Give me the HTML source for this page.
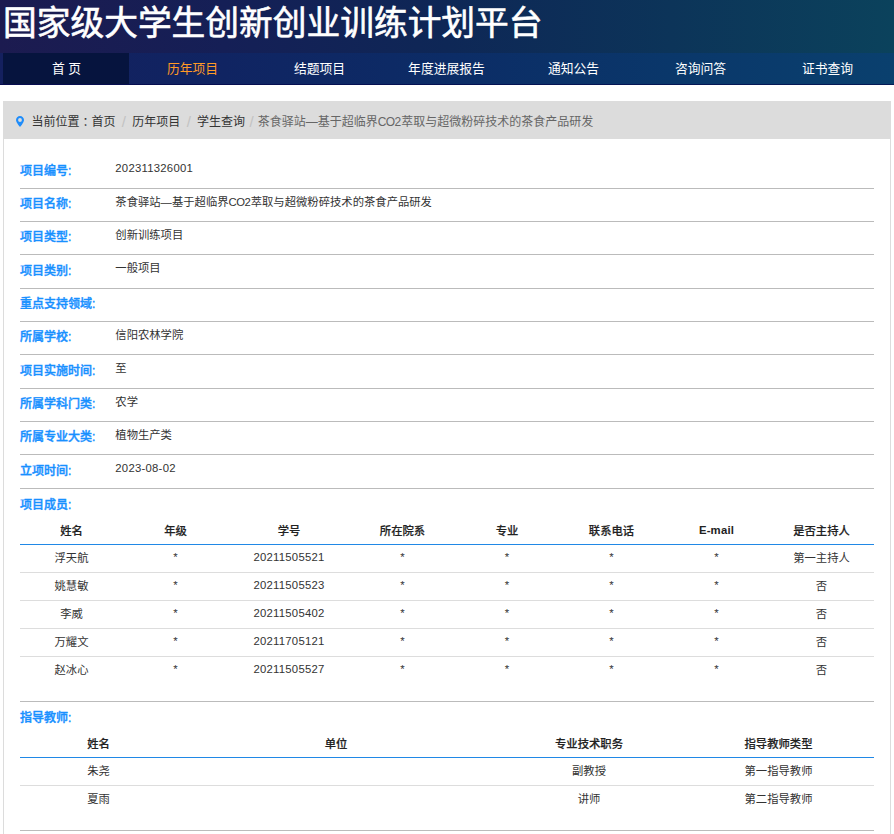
<!DOCTYPE html>
<html lang="zh-CN">
<head>
<meta charset="utf-8">
<title>国家级大学生创新创业训练计划平台</title>
<style>
*{box-sizing:border-box;margin:0;padding:0}
html,body{width:894px;height:834px;overflow:hidden;background:#fff}
body{font-family:"Liberation Sans","Noto Sans CJK SC",sans-serif;font-size:12px;color:#333;position:relative}
.header{position:absolute;left:0;top:0;width:894px;height:85px;background:linear-gradient(90deg,#1c1b50 0%,#151f56 25%,#0e2756 50%,#0c3459 75%,#0b425c 100%)}
.title{position:absolute;left:3px;top:-2px;font-size:33.72px;line-height:50px;color:#fff;white-space:nowrap;font-weight:400;-webkit-text-stroke:.6px #fff}
.nav{position:absolute;left:0;top:53px;width:894px;padding-left:3px;height:32px;border-bottom:1px solid rgba(0,0,70,.6);background:linear-gradient(90deg,#14205e 0%,#102462 25%,#0c2c66 50%,#0a376a 75%,#0a406e 100%);display:flex;list-style:none}
.nav li{width:127px;height:31px;line-height:31px;text-align:center;color:#fff;font-size:12.8px;white-space:nowrap}
.nav li.home{width:126px;background:#06143e;text-indent:1px}
.nav li.on{color:#ff9a26}
.wrap{position:absolute;left:3px;top:101px;width:888px;height:740px;border:1px solid #dcdcdc;border-top:0;background:#fff}
.crumb{position:absolute;left:-1px;top:0;width:888px;height:38px;background:#dcdcdc;line-height:37px;font-size:12px;color:#333;white-space:nowrap}
.crumb svg{position:absolute;left:13px;top:15px}
.crumb .t{position:absolute;left:28.5px;top:3px;height:37px}
.crumb em{font-style:normal;position:relative;left:3px}
.crumb i{font-style:normal;color:#c2c2c2;font-size:15px;line-height:1;padding:0 6.3px;position:relative;top:1px}
.crumb i.l{padding:0 4px 0 4.5px}
.crumb .last{color:#666}
.row{position:absolute;left:16px;width:854px;border-bottom:1px solid #bbb}
.row b{position:absolute;left:0;bottom:9px;line-height:16px;color:#1890ff;font-weight:500;-webkit-text-stroke:.4px #1890ff;font-size:12px;white-space:nowrap}
.row span{position:absolute;left:95.3px;top:5px;line-height:16px;font-size:11.33px;color:#333;white-space:nowrap}
.n{letter-spacing:.25px}
small{font-size:inherit;letter-spacing:-.6px;margin-right:.6px}
table{position:absolute;left:16px;width:854px;border-collapse:collapse;table-layout:fixed}
th{height:28px;font-size:11.33px;font-weight:500;-webkit-text-stroke:.2px #222;color:#222;border-bottom:1px solid #2088e6;text-align:center;padding:0}
td{height:28px;font-size:11.33px;color:#333;border-bottom:1px solid #ddd;text-align:center;padding:0 0 2px}
tr:last-child td{border-bottom:0}
th.e{font-weight:700;-webkit-text-stroke:0;letter-spacing:.2px}
</style>
</head>
<body>
<div class="header">
  <div class="title">国家级大学生创新创业训练计划平台</div>
  <ul class="nav">
    <li class="home">首 页</li>
    <li class="on">历年项目</li>
    <li>结题项目</li>
    <li>年度进展报告</li>
    <li>通知公告</li>
    <li>咨询问答</li>
    <li>证书查询</li>
  </ul>
</div>
<div class="wrap">
  <div class="crumb">
    <svg width="8" height="11" viewBox="0 0 8 11"><path d="M4 0C1.8 0 0 1.8 0 4 0 6.6 4 11 4 11S8 6.6 8 4C8 1.8 6.2 0 4 0zm0 5.9a1.9 1.9 0 1 1 0-3.8 1.9 1.9 0 0 1 0 3.8z" fill="#1e8cfa"/></svg>
    <div class="t">当前位置<em>：</em>首页<i>/</i>历年项目<i>/</i>学生查询<i class="l">/</i><span class="last">茶食驿站—基于超临界<small>CO2</small>萃取与超微粉碎技术的茶食产品研发</span></div>
  </div>

  <div class="row" style="top:54px;height:34px"><b>项目编号:</b><span class="n">202311326001</span></div>
  <div class="row" style="top:88px;height:33px"><b>项目名称:</b><span>茶食驿站—基于超临界<small>CO2</small>萃取与超微粉碎技术的茶食产品研发</span></div>
  <div class="row" style="top:121px;height:33px"><b>项目类型:</b><span>创新训练项目</span></div>
  <div class="row" style="top:154px;height:34px"><b>项目类别:</b><span>一般项目</span></div>
  <div class="row" style="top:188px;height:33px"><b>重点支持领域:</b><span></span></div>
  <div class="row" style="top:221px;height:33px"><b>所属学校:</b><span>信阳农林学院</span></div>
  <div class="row" style="top:254px;height:34px"><b>项目实施时间:</b><span>至</span></div>
  <div class="row" style="top:288px;height:33px"><b>所属学科门类:</b><span>农学</span></div>
  <div class="row" style="top:321px;height:33px"><b>所属专业大类:</b><span>植物生产类</span></div>
  <div class="row" style="top:354px;height:34px"><b>立项时间:</b><span class="n">2023-08-02</span></div>

  <div class="row" style="top:388px;height:213px"><b style="bottom:auto;top:8px">项目成员:</b></div>
  <table style="top:415px">
    <colgroup><col style="width:103px"><col style="width:105px"><col style="width:122px"><col style="width:105px"><col style="width:104px"><col style="width:105px"><col style="width:105px"><col style="width:105px"></colgroup>
    <tr><th>姓名</th><th>年级</th><th>学号</th><th>所在院系</th><th>专业</th><th>联系电话</th><th class="e">E-mail</th><th>是否主持人</th></tr>
    <tr><td>浮天航</td><td>*</td><td class="n">20211505521</td><td>*</td><td>*</td><td>*</td><td>*</td><td>第一主持人</td></tr>
    <tr><td>姚慧敏</td><td>*</td><td class="n">20211505523</td><td>*</td><td>*</td><td>*</td><td>*</td><td>否</td></tr>
    <tr><td>李威</td><td>*</td><td class="n">20211505402</td><td>*</td><td>*</td><td>*</td><td>*</td><td>否</td></tr>
    <tr><td>万耀文</td><td>*</td><td class="n">20211705121</td><td>*</td><td>*</td><td>*</td><td>*</td><td>否</td></tr>
    <tr><td>赵冰心</td><td>*</td><td class="n">20211505527</td><td>*</td><td>*</td><td>*</td><td>*</td><td>否</td></tr>
  </table>

  <div class="row" style="top:601px;height:129px"><b style="bottom:auto;top:8px">指导教师:</b></div>
  <table style="top:628px">
    <colgroup><col style="width:157px"><col style="width:318px"><col style="width:188px"><col style="width:191px"></colgroup>
    <tr><th>姓名</th><th>单位</th><th>专业技术职务</th><th>指导教师类型</th></tr>
    <tr><td>朱尧</td><td></td><td>副教授</td><td>第一指导教师</td></tr>
    <tr><td>夏雨</td><td></td><td>讲师</td><td>第二指导教师</td></tr>
  </table>
</div>
</body>
</html>
